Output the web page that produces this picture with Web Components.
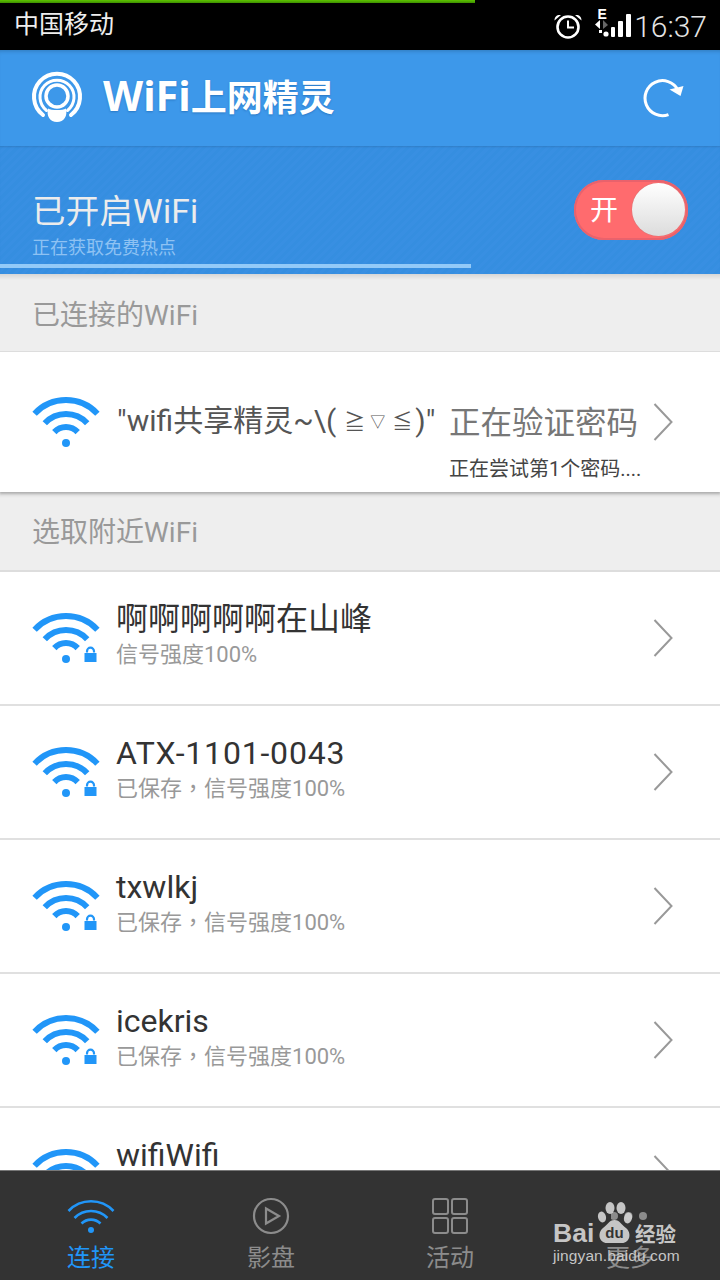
<!DOCTYPE html>
<html lang="zh"><head><meta charset="utf-8"><title>WiFi上网精灵</title>
<style>
html,body{margin:0;padding:0;background:#fff}
body{width:720px;height:1280px;overflow:hidden;font-family:Roboto,"Noto Sans CJK SC",sans-serif}
.k1{font-size:21px;margin:0 5px 0 8px;vertical-align:2px}
.k2{font-size:15px;margin:0 7px 0 0;vertical-align:4px}
.k3{font-size:20px;margin:0 3px 0 0;vertical-align:2px}
</style></head><body>
<x-app>
  <x-status-bar></x-status-bar>
  <x-app-header></x-app-header>
  <x-wifi-banner></x-wifi-banner>
  <x-wifi-list>
    <x-section-label style="--h:78px">已连接的WiFi</x-section-label>
    <x-wifi-row connected>
      <span slot="name">"wifi共享精灵~\(<span class="k1">≧</span><span class="k2">▽</span><span class="k3">≦</span>)"</span>
      <span slot="status">正在验证密码</span>
      <span slot="detail">正在尝试第1个密码....</span>
    </x-wifi-row>
    <x-section-label style="--h:80px;--b:2px;--o:-1px">选取附近WiFi</x-section-label>
    <x-wifi-row locked name="啊啊啊啊啊在山峰" sub="信号强度100%"></x-wifi-row>
    <x-wifi-row locked name="ATX-1101-0043" spacing=".8px" sub="已保存，信号强度100%"></x-wifi-row>
    <x-wifi-row locked name="txwlkj" sub="已保存，信号强度100%"></x-wifi-row>
    <x-wifi-row locked name="icekris" sub="已保存，信号强度100%"></x-wifi-row>
    <x-wifi-row locked name="wifiWifi" sub="已保存，信号强度100%"></x-wifi-row>
  </x-wifi-list>
  <x-tab-bar></x-tab-bar>
  <x-watermark></x-watermark>
</x-app>
<script>
const FONT='Roboto,"Noto Sans CJK SC",sans-serif';
function def(name,html){
  customElements.define(name,class extends HTMLElement{
    connectedCallback(){
      if(this.shadowRoot)return;
      const r=this.attachShadow({mode:'open'});
      r.innerHTML=typeof html==='function'?html(this):html;
    }
  });
}
def('x-app',`<style>:host{display:flex;flex-direction:column;position:relative;width:720px;height:1280px;overflow:hidden;font-family:${FONT}}</style><slot></slot>`);

def('x-status-bar',`<style>
:host{display:flex;align-items:center;height:50px;background:#000;color:#eee;position:relative;flex:none;padding:0 13px 0 14px;box-sizing:border-box}
.load{position:absolute;left:0;top:0;width:475px;height:3px;background:linear-gradient(#5cc400,#3f8f00)}
.carrier{font-size:25px;line-height:50px;flex:1;position:relative}
.icons{display:flex;align-items:center}
svg{display:block}
.time{font-size:30px;font-weight:300;color:#e4e4e4;margin-left:2px;position:relative;top:1px}
</style>
<div class="load"></div><span class="carrier">中国移动</span>
<div class="icons">
<svg width="30" height="30" viewBox="0 0 30 30" style="margin:4px 12px 0 0">
<circle cx="15" cy="15" r="10.500" fill="none" stroke="#fff" stroke-width="2.600"/>
<path d="M15 8.500V15.500H21" fill="none" stroke="#fff" stroke-width="2"/>
<path d="M1.500 8.500C1.500 4.500 4 2.500 8 3Z M28.500 8.500C28.500 4.500 26 2.500 22 3Z" fill="#fff"/>
</svg>
<svg width="37" height="34" viewBox="0 0 37 34" style="margin-top:-6px">
<text x="2.500" y="14" font-family="Liberation Sans" font-weight="700" font-size="14" fill="#fff">E</text>
<path d="M0 19.500 5 15V24Z" fill="#fff"/>
<path d="M8 15 13 20 8 24Z" fill="#666"/>
<rect x="4" y="25" width="3" height="3" fill="#fff"/>
<circle cx="11" cy="29" r="2.600" fill="#fff"/>
<rect x="16" y="22" width="4" height="10" rx="1" fill="#fff"/>
<rect x="23" y="16" width="5" height="16" rx="1" fill="#fff"/>
<rect x="31" y="9" width="5" height="23" rx="1" fill="#fff"/>
</svg>
</div>
<span class="time">16:37</span>`);

def('x-app-header',`<style>
:host{display:flex;align-items:center;height:96px;flex:none;background:#3d98ea;padding:0 36px 0 31px;box-sizing:border-box;box-shadow:inset 0 4px 4px -3px rgba(0,0,0,.2);position:relative}
.t{flex:1;color:#fff;font-size:36px;font-weight:700;margin-left:18px;line-height:96px;text-shadow:0 1px 2px rgba(0,60,130,.35);font-family:"Noto Sans","Noto Sans CJK SC",sans-serif}
.t b{font-size:41.500px;font-weight:700;line-height:1}
svg{display:block}
</style>
<svg width="54" height="54" viewBox="0 0 54 54">
<path d="M12 44A23 23 0 1 1 40 44" fill="none" stroke="#fff" stroke-width="4" stroke-linecap="round"/>
<path d="M15.500 39.500A17 17 0 1 1 36.500 39.500" fill="none" stroke="#fff" stroke-width="3" stroke-linecap="round"/>
<circle cx="26" cy="25" r="11" fill="none" stroke="#fff" stroke-width="3.500"/>
<path d="M17.200 37.500C20 39.500 32 39.500 34.800 37.500C37 45 33 51 26 51C19 51 15 45 17.200 37.500Z" fill="#fff"/>
</svg>
<span class="t"><b>WiFi</b>上网精灵</span>
<svg width="42" height="42" viewBox="0 0 42 42">
<path d="M26.500 37.600A17.500 17.500 0 1 1 36 13" fill="none" stroke="#fff" stroke-width="3"/>
<path d="M27.500 12.500 41.500 9 38.500 19Z" fill="#fff"/>
</svg>`);

def('x-toggle',`<style>
:host{display:block;width:114px;height:60px;box-sizing:border-box;border-radius:30px;background:#ff6b6e;box-shadow:inset 0 0 0 2px #e9626c;position:relative;flex:none}
.l{position:absolute;left:16px;top:1px;line-height:60px;font-size:28px;color:#fff}
.k{position:absolute;left:58px;top:3px;width:53px;height:53px;border-radius:50%;background:linear-gradient(#fff,#dcdcdc);box-shadow:0 0 1px #888}
</style><span class="l">开</span><span class="k"></span>`);

def('x-wifi-banner',`<style>
:host{display:block;height:128px;flex:none;position:relative;box-sizing:border-box;padding-top:45px;
background:repeating-linear-gradient(135deg,#358ee0 0 3px,#388fe2 3px 6px);box-shadow:inset 0 2px 2px -1px rgba(0,0,0,.12);z-index:1}
.row{display:flex;padding:0 32px;align-items:flex-start}
.txt{flex:1}
.a{font-size:33.500px;line-height:42px;color:#ececec;letter-spacing:.2px}
.b{font-size:18px;line-height:26px;color:#8ec2f3;margin-top:2px}
.bar{position:absolute;left:0;top:118px;width:471px;height:4px;background:#93caf8}
x-toggle{margin-top:-11px}
</style>
<div class="row"><div class="txt"><div class="a">已开启WiFi</div><div class="b">正在获取免费热点</div></div><x-toggle></x-toggle></div>
<div class="bar"></div>`);

def('x-wifi-list',`<style>:host{display:block;flex:1;min-height:0;overflow:hidden;background:#fff}</style><slot></slot>`);

def('x-section-label',`<style>
:host{display:flex;align-items:center;height:var(--h,78px);box-sizing:border-box;padding-left:32px;background:#eee;color:#999;font-size:28px;border-bottom:var(--b,1px) solid #ddd;background-image:linear-gradient(rgba(0,0,0,.1),rgba(0,0,0,0) 6px)}
span{position:relative;top:var(--o,0)}
</style><span><slot></slot></span>`);

def('x-wifi-icon',el=>`<style>:host{display:block;width:68px;height:50px;flex:none}svg{display:block;overflow:visible}</style>
<svg width="68" height="50" viewBox="0 0 68 50" fill="none" stroke="#2196f8" stroke-width="6">
<path d="M2.600 16.700A43 43 0 0 1 65.400 16.700"/>
<path d="M12.800 26.200A29 29 0 0 1 55.200 26.200"/>
<path d="M22.300 35.100A16 16 0 0 1 45.700 35.100"/>
<circle cx="34" cy="46" r="4" fill="#2196f8" stroke="none"/>
${el.hasAttribute('locked')?`<path d="M55 39.500V38.200A3.500 3.500 0 0 1 62 38.200V39.500" stroke-width="2.200"/><rect x="52.500" y="40" width="12" height="9" fill="#2196f8" stroke="none"/>`:''}
</svg>`);

def('x-wifi-row',el=>{
 const c=el.hasAttribute('connected');
 const esc=s=>(s||'').replace(/&/g,'&amp;').replace(/</g,'&lt;');
 const sub=esc(el.getAttribute('sub')).replace('，','<span class="tc" lang="zh-Hant">，</span>');
 return `<style>
:host{display:flex;align-items:center;flex:none;box-sizing:border-box;position:relative;padding:0 47px 0 32px;background:#fff;
height:${c?'140px':'134px'};${c?'box-shadow:0 2px 2px rgba(0,0,0,.18);':'border-bottom:2px solid #e0e0e0;'}}
.main{flex:1;min-width:0;margin-left:16px;padding-bottom:6px}
.n{font-size:32px;line-height:40px;color:#333;white-space:nowrap;letter-spacing:${el.getAttribute('spacing')||'0'}}
.s{font-size:22px;line-height:32px;color:#999;white-space:nowrap}
.tc{font-family:"Noto Sans CJK TC",sans-serif;line-height:0}
.c{font-size:30px;color:#555;line-height:40px;white-space:nowrap;margin-left:1px;position:relative;top:-1px}
.status{align-self:flex-start;width:190px;flex:none;margin:52px 14px 0 0}
.st{font-size:31.500px;line-height:40px;color:#777;white-space:nowrap}
.de{font-size:20px;line-height:34px;color:#444;white-space:nowrap;margin-top:8px}
svg.ch{flex:none;display:block}
</style>
<x-wifi-icon ${c?'':'locked'}></x-wifi-icon>
${c?`<div class="main" style="padding:0"><div class="c"><slot name="name"></slot></div></div>
<div class="status"><div class="st"><slot name="status"></slot></div><div class="de"><slot name="detail"></slot></div></div>`
:`<div class="main"><div class="n">${esc(el.getAttribute('name'))}</div><div class="s">${sub}</div></div>`}
<svg class="ch" width="20" height="38" viewBox="0 0 20 38" fill="none" stroke="#999" stroke-width="2"><path d="M1.500 1 18.500 19 1.500 37"/></svg>`});

def('x-tab-item',el=>`<style>
:host{display:flex;flex-direction:column;align-items:center;color:${el.hasAttribute('active')?'#2196f8':'#8c8c8c'};font-size:24px}
.i{height:38px;margin-top:26px;display:flex;align-items:center;justify-content:center}
.l{line-height:34px;margin-top:6px}
::slotted(svg){display:block}
</style><div class="i"><slot name="icon"></slot></div><div class="l"><slot></slot></div>`);

def('x-tab-bar',`<style>
:host{display:grid;grid-template-columns:182px 178px 180px 180px;height:110px;flex:none;box-sizing:border-box;background:#333;border-top:1px solid #777;position:relative}
svg{display:block}
</style>
<x-tab-item active><svg slot="icon" width="48" height="36" viewBox="0 0 48 36" fill="none" stroke="#2196f8" stroke-width="2.600"><path d="M1.500 13A31 31 0 0 1 46.500 13"/><path d="M7.500 20A23 23 0 0 1 40.500 20"/><path d="M14.500 25.500A13.500 13.500 0 0 1 33.500 25.500"/><circle cx="24" cy="32" r="3" fill="#2196f8" stroke="none"/></svg>连接</x-tab-item>
<x-tab-item><svg slot="icon" width="38" height="38" viewBox="0 0 38 38" fill="none" stroke="#8c8c8c" stroke-width="2.200"><circle cx="19" cy="19" r="17"/><path d="M14 11.500V26.500L27 19Z"/></svg>影盘</x-tab-item>
<x-tab-item><svg slot="icon" width="38" height="38" viewBox="0 0 38 38" fill="none" stroke="#8c8c8c" stroke-width="2"><rect x="2" y="2" width="15" height="15" rx="2"/><rect x="21" y="2" width="15" height="15" rx="2"/><rect x="2" y="21" width="15" height="15" rx="2"/><rect x="21" y="21" width="15" height="15" rx="2"/></svg>活动</x-tab-item>
<x-tab-item><svg slot="icon" width="38" height="12" viewBox="0 0 38 12" fill="#8c8c8c"><circle cx="3" cy="6" r="4"/><circle cx="17.500" cy="6" r="4"/><circle cx="32" cy="6" r="4"/></svg>更多</x-tab-item>`);

def('x-watermark',`<style>
:host{position:absolute;left:553px;top:1202px;width:130px;height:66px;color:#d2d2d2;display:block;opacity:.92}
.top{display:flex;align-items:flex-start;height:44px}
.bai{font:700 26.500px/26px "Liberation Sans",sans-serif;margin-top:18px;width:43px;flex:none}
.paw{display:block;flex:none}
.jy{font:700 20.500px/22px "Noto Sans CJK SC",sans-serif;margin:20px 0 0 2px;white-space:nowrap}
.u{font:400 15.500px/20px "Liberation Sans",sans-serif;white-space:nowrap;letter-spacing:.1px}
svg text{font-family:"Liberation Sans",sans-serif}
</style>
<div class="top"><span class="bai">Bai</span>
<svg class="paw" width="37" height="42" viewBox="0 0 37 42" fill="#d2d2d2">
<ellipse cx="6" cy="15" rx="4" ry="5.500" transform="rotate(-15 6 15)"/>
<ellipse cx="14" cy="6" rx="4.500" ry="6"/>
<ellipse cx="25" cy="6" rx="4.500" ry="6"/>
<ellipse cx="32" cy="16" rx="4" ry="5.500" transform="rotate(15 32 16)"/>
<path d="M18.500 18C24 18 25.500 23 30 26C36 31 34 41 26 41H11C3 41 1 31 7 26C11.500 23 13 18 18.500 18Z"/>
<text x="18.500" y="36" text-anchor="middle" font-size="15" font-weight="700" fill="#333">du</text>
</svg>
<span class="jy">经验</span></div>
<div class="u">jingyan.baidu.com</div>`);
</script>
</body></html>
